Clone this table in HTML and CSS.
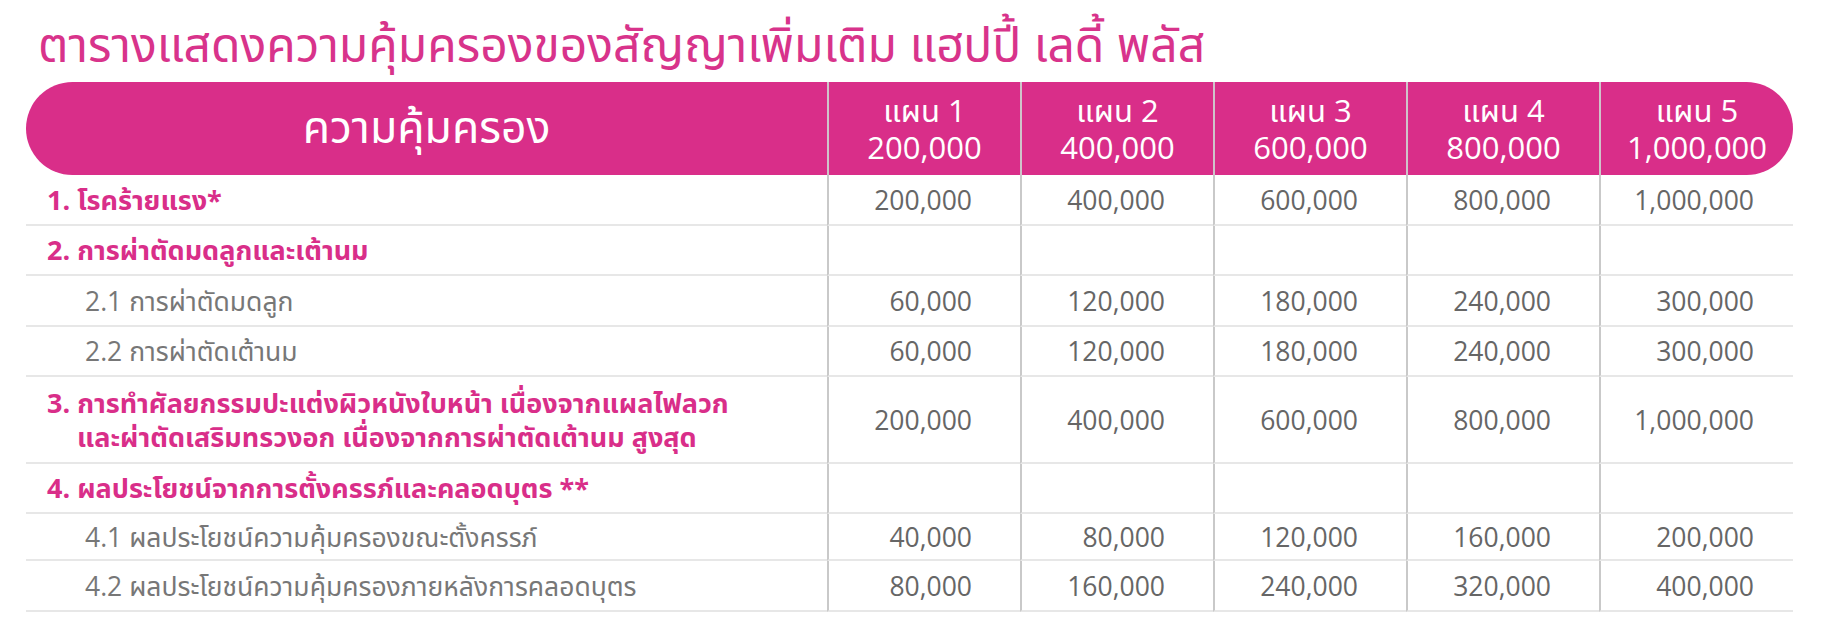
FILE: index.html
```html
<!DOCTYPE html>
<html lang="th">
<head>
<meta charset="utf-8">
<title>ตารางแสดงความคุ้มครอง</title>
<link rel="stylesheet" href="styles.css">
</head>
<body>
<div class="page">
  <h1 class="title">ตารางแสดงความคุ้มครองของสัญญาเพิ่มเติม แฮปปี้ เลดี้ พลัส</h1>
  <table class="cov">
    <colgroup>
      <col class="c-label"><col class="c-plan"><col class="c-plan"><col class="c-plan"><col class="c-plan"><col class="c-last">
    </colgroup>
    <thead>
      <tr>
        <th class="h-label">ความคุ้มครอง</th>
        <th class="h-plan">แผน 1<br>200,000</th>
        <th class="h-plan">แผน 2<br>400,000</th>
        <th class="h-plan">แผน 3<br>600,000</th>
        <th class="h-plan">แผน 4<br>800,000</th>
        <th class="h-plan h-end">แผน 5<br>1,000,000</th>
      </tr>
    </thead>
    <tbody>
      <tr class="r51">
        <td class="main">1. โรคร้ายแรง*</td>
        <td>200,000</td><td>400,000</td><td>600,000</td><td>800,000</td><td class="last">1,000,000</td>
      </tr>
      <tr class="r50">
        <td class="main">2. การผ่าตัดมดลูกและเต้านม</td>
        <td></td><td></td><td></td><td></td><td class="last"></td>
      </tr>
      <tr class="r51">
        <td class="sub">2.1 การผ่าตัดมดลูก</td>
        <td>60,000</td><td>120,000</td><td>180,000</td><td>240,000</td><td class="last">300,000</td>
      </tr>
      <tr class="r50">
        <td class="sub">2.2 การผ่าตัดเต้านม</td>
        <td>60,000</td><td>120,000</td><td>180,000</td><td>240,000</td><td class="last">300,000</td>
      </tr>
      <tr class="r87">
        <td class="main">3. การทำศัลยกรรมปะแต่งผิวหนังใบหน้า เนื่องจากแผลไฟลวก<br><span class="cont">และผ่าตัดเสริมทรวงอก เนื่องจากการผ่าตัดเต้านม สูงสุด</span></td>
        <td>200,000</td><td>400,000</td><td>600,000</td><td>800,000</td><td class="last">1,000,000</td>
      </tr>
      <tr class="r50">
        <td class="main">4. ผลประโยชน์จากการตั้งครรภ์และคลอดบุตร **</td>
        <td></td><td></td><td></td><td></td><td class="last"></td>
      </tr>
      <tr class="r47">
        <td class="sub">4.1 ผลประโยชน์ความคุ้มครองขณะตั้งครรภ์</td>
        <td>40,000</td><td>80,000</td><td>120,000</td><td>160,000</td><td class="last">200,000</td>
      </tr>
      <tr class="r51">
        <td class="sub">4.2 ผลประโยชน์ความคุ้มครองภายหลังการคลอดบุตร</td>
        <td>80,000</td><td>160,000</td><td>240,000</td><td>320,000</td><td class="last">400,000</td>
      </tr>
    </tbody>
  </table>
</div>
</body>
</html>
```
FILE: styles.css
```css
html, body {
  margin: 0;
  padding: 0;
  background: #ffffff;
}
.page {
  padding: 0 0 0 26px;
  font-family: "Open Sans", "Noto Sans Thai", "Noto Sans", sans-serif;
}
.title {
  margin: 0;
  padding: 16px 0 0 12px;
  height: 82px;
  box-sizing: border-box;
  font-weight: 400;
  font-size: 48px;
  line-height: 56px;
  color: #d8338b;
  white-space: nowrap;
}
.cov {
  border-collapse: separate;
  border-spacing: 0;
  table-layout: fixed;
  width: 1767px;
}
.c-label { width: 801px; }
.c-plan { width: 193px; }
.c-last { width: 194px; }
.cov th {
  background: #d92e89;
  color: #ffffff;
  font-weight: 400;
  height: 93px;
  padding: 0;
  box-sizing: border-box;
  vertical-align: middle;
}
.h-label {
  font-size: 44.5px;
  border-radius: 47px 0 0 47px;
}
.h-plan {
  font-size: 31px;
  line-height: 37px;
  border-left: 2px solid #cfc3ca;
}
.h-end {
  border-radius: 0 47px 47px 0;
}
.cov td {
  padding: 0 48px 0 0;
  box-sizing: border-box;
  border-bottom: 2px solid #e7e7e7;
  border-left: 2px solid #c9c9c9;
  text-align: right;
  vertical-align: middle;
  font-size: 26.5px;
  color: #666666;
  white-space: nowrap;
}
.cov td.last {
  padding-right: 39px;
}
.cov td.main, .cov td.sub {
  border-left: none;
  text-align: left;
  padding: 0 0 0 21px;
  font-size: 26.5px;
  line-height: 34px;
}
.cov td.main {
  color: #d92e89;
  font-weight: 700;
  font-size: 27px;
}
.cov td.sub {
  color: #777777;
  padding-left: 59px;
}
.cont {
  padding-left: 30px;
}
.r51 td { height: 51px; }
.r50 td { height: 50px; }
.r47 td { height: 47px; }
.r87 td { height: 87px; }
```
